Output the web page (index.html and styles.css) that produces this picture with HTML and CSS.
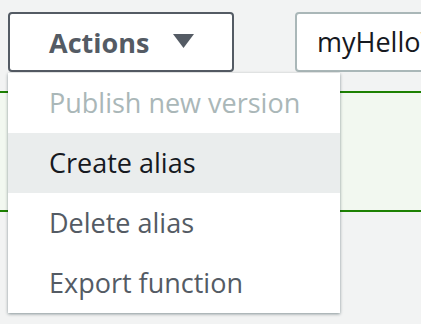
FILE: index.html
```html
<!DOCTYPE html>
<html>
<head>
<meta charset="utf-8">
<link rel="stylesheet" href="styles.css">
</head>
<body>
<div class="page">
  <div class="toolbar">
    <button class="actions-btn">
      <span class="actions-label">Actions</span>
      <svg class="caret" width="21" height="14" viewBox="0 0 21 14"><path d="M0 0H21L10.5 14Z" fill="#545b64"/></svg>
    </button>
    <div class="name-input">myHelloWorld</div>
  </div>
  <div class="panel"></div>
  <ul class="menu">
    <li class="item disabled">Publish new version</li>
    <li class="item hover">Create alias</li>
    <li class="item">Delete alias</li>
    <li class="item">Export function</li>
  </ul>
</div>
</body>
</html>
```
FILE: styles.css
```css
html, body {
  margin: 0;
  padding: 0;
}
body {
  background: #f2f3f3;
  font-family: "Open Sans", "Noto Sans", sans-serif;
  width: 421px;
  height: 324px;
  overflow: hidden;
}
.page {
  position: relative;
  height: 324px;
  overflow: hidden;
}
.toolbar {
  display: flex;
  align-items: flex-start;
  gap: 61px;
  padding: 12px 0 0 8px;
  white-space: nowrap;
}
.actions-btn {
  box-sizing: border-box;
  width: 226px;
  height: 60px;
  border: 2px solid #545b64;
  border-radius: 4px;
  background: #fff;
  display: flex;
  align-items: center;
  padding: 0 0 0 39px;
  gap: 24px;
  font-family: inherit;
  flex: none;
}
.actions-label {
  font-size: 27px;
  font-weight: 700;
  color: #545b64;
}
.caret {
  display: block;
  margin-top: -2px;
}
.name-input {
  box-sizing: border-box;
  height: 60px;
  width: 200px;
  border: 2px solid #aab7b8;
  border-radius: 4px;
  background: #fff;
  padding: 0 0 0 20px;
  font-size: 27px;
  color: #16191f;
  line-height: 56px;
  flex: none;
}
.panel {
  margin-top: 19px;
  height: 117px;
  border-top: 2px solid #1d8102;
  border-bottom: 2px solid #1d8102;
  background: #f2f8f0;
}
.menu {
  position: absolute;
  left: 8px;
  top: 73px;
  width: 332px;
  margin: 0;
  padding: 0;
  list-style: none;
  background: #fff;
  box-shadow: 0 1px 3px rgba(0, 28, 36, 0.45);
}
.item {
  height: 60px;
  line-height: 60px;
  padding-left: 41px;
  font-size: 27px;
  color: #545b64;
}
.item.disabled {
  color: #aab7b8;
}
.item.hover {
  background: #eaeded;
  color: #16191f;
}
```
